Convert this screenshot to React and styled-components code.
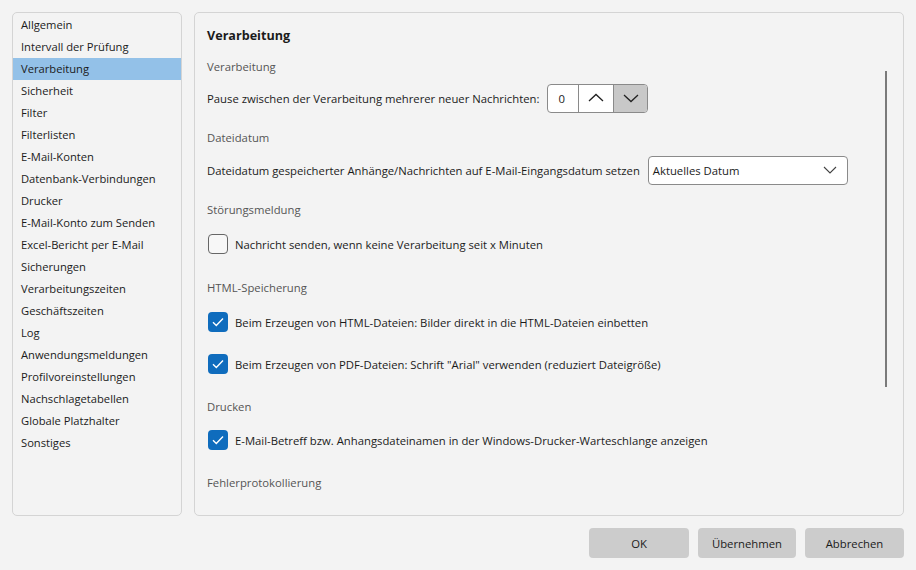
import React from "react";
import styled, { createGlobalStyle } from "styled-components";

const G = createGlobalStyle`
  html,body{margin:0;background:#f3f3f3;font-family:"Open Sans","Noto Sans",sans-serif;font-size:11.3px;color:#1b1b1b;}
  *{box-sizing:border-box;}
`;
const Page = styled.div`width:916px;height:570px;padding:12px 12px 0 12px;display:flex;flex-direction:column;`;
const Top = styled.div`display:flex;gap:12px;height:504px;`;
const Panel = styled.div`border:1px solid #d4d4d4;border-radius:5px;background:#f3f3f3;`;
const Side = styled(Panel)`width:170px;padding-top:1px;font-size:11.2px;`;
const Item = styled.div`height:22px;line-height:22px;padding-left:8px;background:${p=>p.$sel?"#93c1e8":"transparent"};`;
const Main = styled(Panel)`flex:1;position:relative;padding:11px 12px 0 12px;overflow:hidden;`;
const Title = styled.div`font-weight:700;font-size:12.6px;height:24px;line-height:24px;`;
const Head = styled.div`color:#555;height:22px;line-height:22px;margin-top:${p=>p.$mt||0}px;`;
const Row = styled.div`display:flex;align-items:center;gap:8px;height:30px;margin-top:${p=>p.$mt||0}px;`;
const Spin = styled.div`display:flex;border:1px solid #8a8a8a;border-radius:4px;height:29px;overflow:hidden;background:#fff;`;
const SpinVal = styled.div`width:31px;display:flex;align-items:center;padding-left:10px;border-right:1px solid #8a8a8a;`;
const SpinBtn = styled.div`width:34px;display:flex;align-items:center;justify-content:center;background:${p=>p.$on?"#c8c8c8":"#fff"};border-left:${p=>p.$on?"1px solid #8a8a8a":"none"};`;
const Select = styled.div`width:200px;height:29px;border:1px solid #8a8a8a;border-radius:4px;background:#fff;display:flex;align-items:center;justify-content:space-between;padding:0 10px 0 4px;`;
const Box = styled.div`width:20px;height:20px;border-radius:4px;margin-left:1px;margin-right:-1px;display:flex;align-items:center;justify-content:center;${p=>p.$on?"background:#0f6cbd;":"border:1px solid #666;background:#f7f7f7;"}`;
const Scroll = styled.div`position:absolute;right:16px;top:58px;width:2px;height:316px;background:#7a7a7a;`;
const Footer = styled.div`display:flex;justify-content:flex-end;gap:9px;padding-top:12px;`;
const Btn = styled.div`width:${p=>p.$w}px;height:30px;background:#cccccc;border-radius:4px;display:flex;align-items:center;justify-content:center;`;

const Chev = ({up}) => <svg width="16" height="10" viewBox="0 0 16 10"><path d={up?"M1 8L8 1.5L15 8":"M1 2L8 8.5L15 2"} fill="none" stroke="#222" strokeWidth="1.3"/></svg>;
const Check = () => <svg width="12" height="10" viewBox="0 0 12 10"><path d="M1 5.2L4.3 8.4L11 1.6" fill="none" stroke="#fff" strokeWidth="1.4"/></svg>;

const items=["Allgemein","Intervall der Prüfung","Verarbeitung","Sicherheit","Filter","Filterlisten","E-Mail-Konten","Datenbank-Verbindungen","Drucker","E-Mail-Konto zum Senden","Excel-Bericht per E-Mail","Sicherungen","Verarbeitungszeiten","Geschäftszeiten","Log","Anwendungsmeldungen","Profilvoreinstellungen","Nachschlagetabellen","Globale Platzhalter","Sonstiges"];

export default function App(){
  return <><G/><Page>
    <Top>
      <Side>{items.map((t,i)=><Item key={t} $sel={i===2}>{t}</Item>)}</Side>
      <Main>
        <Title>Verarbeitung</Title>
        <Head $mt={8}>Verarbeitung</Head>
        <Row $mt={5}>Pause zwischen der Verarbeitung mehrerer neuer Nachrichten:
          <Spin><SpinVal>0</SpinVal><SpinBtn><Chev up/></SpinBtn><SpinBtn $on><Chev/></SpinBtn></Spin>
        </Row>
        <Head $mt={14}>Dateidatum</Head>
        <Row $mt={6}>Dateidatum gespeicherter Anhänge/Nachrichten auf E-Mail-Eingangsdatum setzen
          <Select>Aktuelles Datum<svg width="14" height="8" viewBox="0 0 14 8"><path d="M1 1L7 7L13 1" fill="none" stroke="#444" strokeWidth="1.1"/></svg></Select>
        </Row>
        <Head $mt={14}>Störungsmeldung</Head>
        <Row $mt={8}><Box/>Nachricht senden, wenn keine Verarbeitung seit x Minuten</Row>
        <Head $mt={18}>HTML-Speicherung</Head>
        <Row $mt={8}><Box $on><Check/></Box>Beim Erzeugen von HTML-Dateien: Bilder direkt in die HTML-Dateien einbetten</Row>
        <Row $mt={12}><Box $on><Check/></Box>Beim Erzeugen von PDF-Dateien: Schrift "Arial" verwenden (reduziert Dateigröße)</Row>
        <Head $mt={17}>Drucken</Head>
        <Row $mt={7}><Box $on><Check/></Box>E-Mail-Betreff bzw. Anhangsdateinamen in der Windows-Drucker-Warteschlange anzeigen</Row>
        <Head $mt={17}>Fehlerprotokollierung</Head>
        <Scroll/>
      </Main>
    </Top>
    <Footer><Btn $w={100}>OK</Btn><Btn $w={98}>Übernehmen</Btn><Btn $w={99}>Abbrechen</Btn></Footer>
  </Page></>;
}
